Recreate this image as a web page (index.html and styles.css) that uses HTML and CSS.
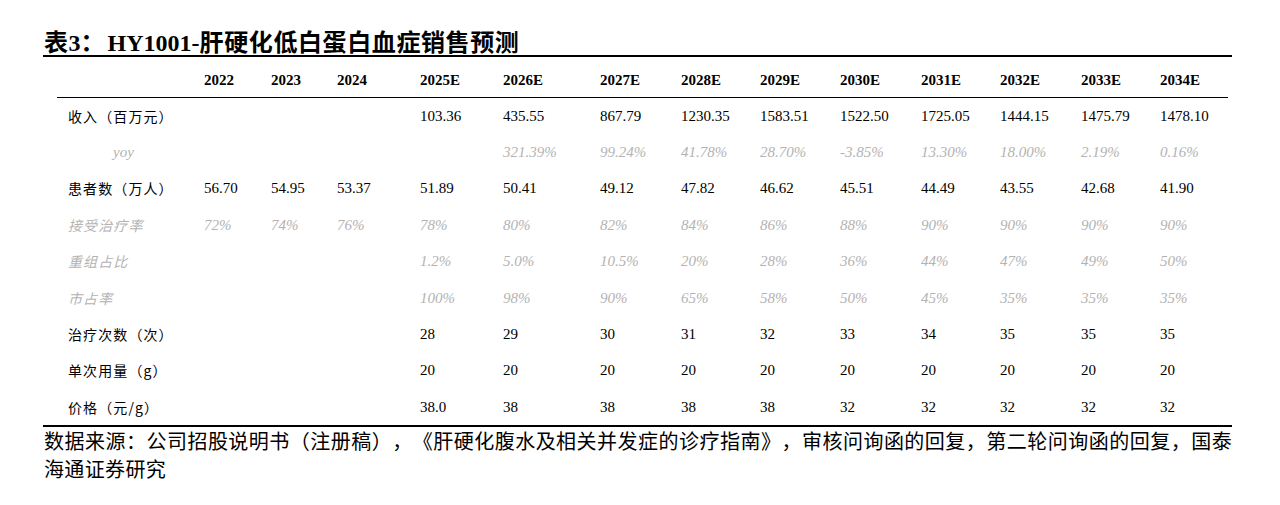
FILE: index.html
```html
<!DOCTYPE html>
<html lang="zh-CN">
<head>
<meta charset="utf-8">
<title>表3：HY1001-肝硬化低白蛋白血症销售预测</title>
<link rel="stylesheet" href="styles.css">
</head>
<body>
<div class="page">
  <h1 class="title"><span class="cjk">表</span><span class="lat">3</span><span class="cjk colon">：</span><span class="lat">HY1001-</span><span class="cjk">肝硬化低白蛋白血症销售预测</span></h1>
  <div class="table">
    <div class="row head">
      <div class="label"></div>
      <div>2022</div><div>2023</div><div>2024</div><div>2025E</div><div>2026E</div><div>2027E</div><div>2028E</div><div>2029E</div><div>2030E</div><div>2031E</div><div>2032E</div><div>2033E</div><div>2034E</div>
    </div>
    <div class="row">
      <div class="label">收入（百万元）</div>
      <div></div><div></div><div></div><div>103.36</div><div>435.55</div><div>867.79</div><div>1230.35</div><div>1583.51</div><div>1522.50</div><div>1725.05</div><div>1444.15</div><div>1475.79</div><div>1478.10</div>
    </div>
    <div class="row muted">
      <div class="label yoy">yoy</div>
      <div></div><div></div><div></div><div></div><div>321.39%</div><div>99.24%</div><div>41.78%</div><div>28.70%</div><div>-3.85%</div><div>13.30%</div><div>18.00%</div><div>2.19%</div><div>0.16%</div>
    </div>
    <div class="row">
      <div class="label">患者数（万人）</div>
      <div>56.70</div><div>54.95</div><div>53.37</div><div>51.89</div><div>50.41</div><div>49.12</div><div>47.82</div><div>46.62</div><div>45.51</div><div>44.49</div><div>43.55</div><div>42.68</div><div>41.90</div>
    </div>
    <div class="row muted">
      <div class="label">接受治疗率</div>
      <div>72%</div><div>74%</div><div>76%</div><div>78%</div><div>80%</div><div>82%</div><div>84%</div><div>86%</div><div>88%</div><div>90%</div><div>90%</div><div>90%</div><div>90%</div>
    </div>
    <div class="row muted">
      <div class="label">重组占比</div>
      <div></div><div></div><div></div><div>1.2%</div><div>5.0%</div><div>10.5%</div><div>20%</div><div>28%</div><div>36%</div><div>44%</div><div>47%</div><div>49%</div><div>50%</div>
    </div>
    <div class="row muted">
      <div class="label">市占率</div>
      <div></div><div></div><div></div><div>100%</div><div>98%</div><div>90%</div><div>65%</div><div>58%</div><div>50%</div><div>45%</div><div>35%</div><div>35%</div><div>35%</div>
    </div>
    <div class="row">
      <div class="label">治疗次数（次）</div>
      <div></div><div></div><div></div><div>28</div><div>29</div><div>30</div><div>31</div><div>32</div><div>33</div><div>34</div><div>35</div><div>35</div><div>35</div>
    </div>
    <div class="row">
      <div class="label">单次用量（g）</div>
      <div></div><div></div><div></div><div>20</div><div>20</div><div>20</div><div>20</div><div>20</div><div>20</div><div>20</div><div>20</div><div>20</div><div>20</div>
    </div>
    <div class="row">
      <div class="label">价格（元/g）</div>
      <div></div><div></div><div></div><div>38.0</div><div>38</div><div>38</div><div>38</div><div>38</div><div>32</div><div>32</div><div>32</div><div>32</div><div>32</div>
    </div>
  </div>
  <p class="source">数据来源：公司招股说明书（注册稿），《肝硬化腹水及相关并发症的诊疗指南》，审核问询函的回复，第二轮问询函的回复，国泰海通证券研究</p>
</div>
</body>
</html>
```

FILE: styles.css
```css
html, body {
  margin: 0;
  padding: 0;
  background: #ffffff;
}

.page {
  width: 1189px;
  margin-left: 43px;
  color: #000000;
  text-spacing-trim: space-all;
}

.title {
  margin: 0;
  height: 57px;
  box-sizing: border-box;
  padding-top: 28px;
  padding-left: 1px;
  line-height: 26px;
  font-size: 24px;
  font-weight: bold;
  border-bottom: 2px solid #000000;
  white-space: nowrap;
}

.title .cjk {
  font-family: "Noto Sans CJK SC", sans-serif;
  font-weight: bold;
  letter-spacing: 0.6px;
}

.title .colon {
  letter-spacing: 3px;
}

.title .lat {
  font-family: "Liberation Serif", serif;
  font-weight: bold;
}

.table {
  margin-left: 14px;
  width: 1171px;
}

.row {
  display: grid;
  grid-template-columns: 147px 67px 66px 83px 83px 97px 81px 79px 80px 81px 79px 81px 79px 68px;
  height: 36.4px;
  align-items: center;
  font-family: "Liberation Serif", serif;
  font-size: 15px;
  line-height: 20px;
  white-space: nowrap;
}

.row.head {
  align-items: start;
  padding-top: 13px;
  box-sizing: border-box;
  font-weight: bold;
  border-bottom: 1.5px solid #000000;
  height: 40.5px;
}

.label {
  padding-left: 11px;
  font-family: "Noto Sans CJK SC", sans-serif;
  font-size: 14px;
  letter-spacing: 1.1px;
}

.label.yoy {
  padding-left: 56px;
  font-family: "Liberation Serif", serif;
  font-size: 15px;
  letter-spacing: 0;
}

.row.muted {
  color: #b3b3b3;
  font-style: italic;
}

.source {
  margin: 0;
  border-top: 2px solid #000000;
  padding-left: 1px;
  font-family: "Noto Sans CJK SC", sans-serif;
  font-size: 20px;
  line-height: 28px;
  letter-spacing: 0.35px;
  text-align: justify;
}
```
